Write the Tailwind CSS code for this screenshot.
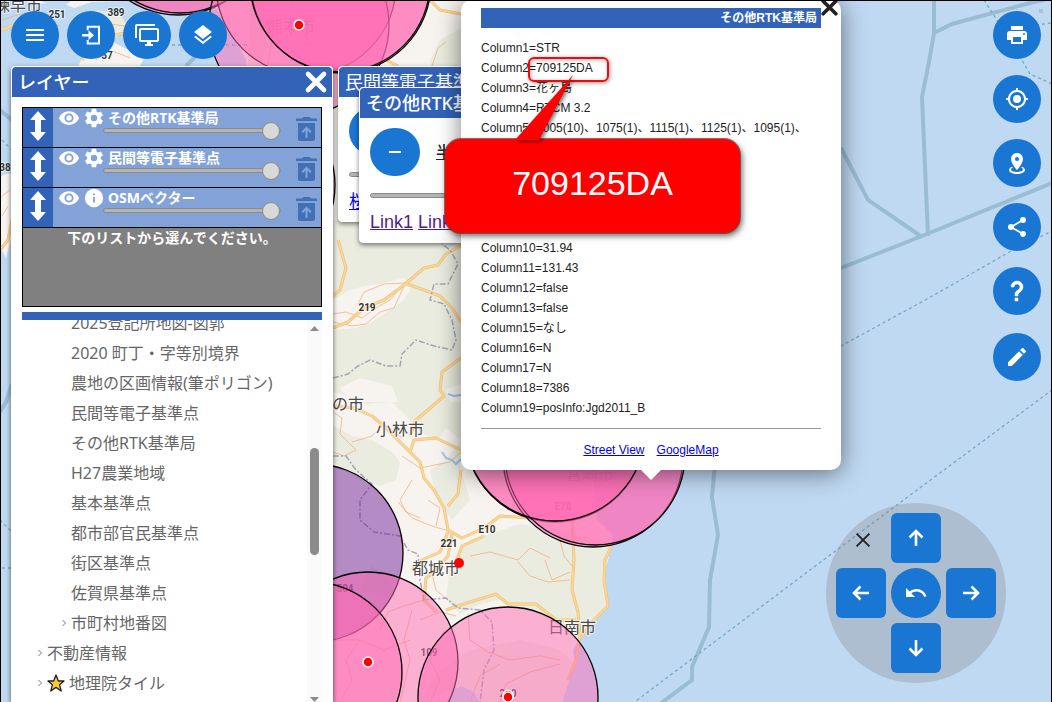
<!DOCTYPE html>
<html lang="ja">
<head>
    <meta charset="UTF-8">
    <meta name="viewport" content="width=device-width, initial-scale=1.0">
    <title>その他RTK基準局</title>
    <script src="https://cdn.jsdelivr.net/npm/@tailwindcss/browser@4"></script>
</head>
<body class="relative h-screen overflow-hidden bg-[#bfd9f2] font-['Noto_Sans','Noto_Sans_CJK_JP',sans-serif]">

    <!-- Icon sprite -->
    <svg class="hidden">
        <symbol id="menu" viewBox="0 0 24 24"><path d="M3,6H21V8H3V6M3,11H21V13H3V11M3,16H21V18H3V16Z"/></symbol>
        <symbol id="login" viewBox="0 0 24 24"><path d="M8.7 7.2V3.7H20V20.5H8.7V17" fill="none" stroke="currentColor" stroke-width="2"/><path d="M3 11H9.5V7.2L15 12.2L9.5 17.2V13.4H3Z"/></symbol>
        <symbol id="monitors" viewBox="0 0 24 24"><path d="M22,17V7H6V17H22M22,5A2,2 0 0,1 24,7V17C24,18.11 23.1,19 22,19H16V21H18V23H10V21H12V19H6C4.89,19 4,18.11 4,17V7A2,2 0 0,1 6,5H22M2,3V15H0V3A2,2 0 0,1 2,1H20V3H2Z"/></symbol>
        <symbol id="layers" viewBox="0 0 24 24"><path d="M12,16L19.36,10.27L21,9L12,2L3,9L4.63,10.27M12,18.54L4.62,12.81L3,14.07L12,21.07L21,14.07L19.37,12.8L12,18.54Z"/></symbol>
        <symbol id="printer" viewBox="0 0 24 24"><path d="M18,3H6V7H18M19,12A1,1 0 0,1 18,11A1,1 0 0,1 19,10A1,1 0 0,1 20,11A1,1 0 0,1 19,12M16,19H8V14H16M19,8H5A3,3 0 0,0 2,11V17H6V21H18V17H22V11A3,3 0 0,0 19,8Z"/></symbol>
        <symbol id="gps" viewBox="0 0 24 24"><path d="M12,8A4,4 0 0,1 16,12A4,4 0 0,1 12,16A4,4 0 0,1 8,12A4,4 0 0,1 12,8M3.05,13H1V11H3.05C3.5,6.83 6.83,3.5 11,3.05V1H13V3.05C17.17,3.5 20.5,6.83 20.95,11H23V13H20.95C20.5,17.17 17.17,20.5 13,20.95V23H11V20.95C6.83,20.5 3.5,17.17 3.05,13M12,5A7,7 0 0,0 5,12A7,7 0 0,0 12,19A7,7 0 0,0 19,12A7,7 0 0,0 12,5Z"/></symbol>
        <symbol id="marker" viewBox="0 0 24 24"><path d="M12,2C15.31,2 18,4.66 18,7.95C18,12.41 12,19 12,19C12,19 6,12.41 6,7.95C6,4.66 8.69,2 12,2M12,6A2,2 0 0,0 10,8A2,2 0 0,0 12,10A2,2 0 0,0 14,8A2,2 0 0,0 12,6M20,19C20,21.21 16.42,23 12,23C7.58,23 4,21.21 4,19C4,17.71 5.22,16.56 7.11,15.83L7.75,16.74C6.67,17.19 6,17.81 6,18.5C6,19.88 8.69,21 12,21C15.31,21 18,19.88 18,18.5C18,17.81 17.33,17.19 16.25,16.74L16.89,15.83C18.78,16.56 20,17.71 20,19Z"/></symbol>
        <symbol id="share" viewBox="0 0 24 24"><path d="M18,16.08C17.24,16.08 16.56,16.38 16.04,16.85L8.91,12.7C8.96,12.47 9,12.24 9,12C9,11.76 8.96,11.53 8.91,11.3L15.96,7.19C16.5,7.69 17.21,8 18,8A3,3 0 0,0 21,5A3,3 0 0,0 18,2A3,3 0 0,0 15,5C15,5.24 15.04,5.47 15.09,5.7L8.04,9.81C7.5,9.31 6.79,9 6,9A3,3 0 0,0 3,12A3,3 0 0,0 6,15C6.79,15 7.5,14.69 8.04,14.19L15.16,18.34C15.11,18.55 15.08,18.77 15.08,19C15.08,20.61 16.39,21.91 18,21.91C19.61,21.91 20.92,20.61 20.92,19A2.92,2.92 0 0,0 18,16.08Z"/></symbol>
        <symbol id="help" viewBox="0 0 24 24"><path d="M10,19H13V22H10V19M12,2C17.35,2.22 19.68,7.62 16.5,11.67C15.67,12.67 14.33,13.33 13.67,14.17C13,15 13,16 13,17H10C10,15.33 10,13.92 10.67,12.92C11.33,11.92 12.67,11.33 13.5,10.67C15.92,8.43 15.32,5.26 12,5A3,3 0 0,0 9,8H6A6,6 0 0,1 12,2Z" stroke="currentColor" stroke-width=".5"/></symbol>
        <symbol id="pencil" viewBox="0 0 24 24"><path d="M20.71,7.04C21.1,6.65 21.1,6 20.71,5.63L18.37,3.29C18,2.9 17.35,2.9 16.96,3.29L15.12,5.12L18.87,8.87M3,17.25V21H6.75L17.81,9.93L14.06,6.18L3,17.25Z"/></symbol>
        <symbol id="undo" viewBox="0 0 24 24"><path d="M12.5,8C9.85,8 7.45,9 5.6,10.6L2,7V16H11L7.38,12.38C8.77,11.22 10.54,10.5 12.5,10.5C16.04,10.5 19.08,12.81 20.14,16L22.5,15.22C21.11,11.03 17.15,8 12.5,8Z"/></symbol>
        <symbol id="arrow" viewBox="0 0 24 24"><path d="M12 20V5M5.5 11.5L12 5L18.5 11.5" fill="none" stroke="currentColor" stroke-width="2.6"/></symbol>
        <symbol id="eye" viewBox="0 0 24 24"><path d="M12,9A3,3 0 0,0 9,12A3,3 0 0,0 12,15A3,3 0 0,0 15,12A3,3 0 0,0 12,9M12,17A5,5 0 0,1 7,12A5,5 0 0,1 12,7A5,5 0 0,1 17,12A5,5 0 0,1 12,17M12,4.5C7,4.5 2.73,7.61 1,12C2.73,16.39 7,19.5 12,19.5C17,19.5 21.27,16.39 23,12C21.27,7.61 17,4.5 12,4.5Z"/></symbol>
        <symbol id="cog" viewBox="0 0 24 24"><path d="M12,15.5A3.5,3.5 0 0,1 8.5,12A3.5,3.5 0 0,1 12,8.5A3.5,3.5 0 0,1 15.5,12A3.5,3.5 0 0,1 12,15.5M19.43,12.97C19.47,12.65 19.5,12.33 19.5,12C19.5,11.67 19.47,11.34 19.43,11L21.54,9.37C21.73,9.22 21.78,8.95 21.66,8.73L19.66,5.27C19.54,5.05 19.27,4.96 19.05,5.05L16.56,6.05C16.04,5.66 15.5,5.32 14.87,5.07L14.5,2.42C14.46,2.18 14.25,2 14,2H10C9.75,2 9.54,2.18 9.5,2.42L9.13,5.07C8.5,5.32 7.96,5.66 7.44,6.05L4.95,5.05C4.73,4.96 4.46,5.05 4.34,5.27L2.34,8.73C2.21,8.95 2.27,9.22 2.46,9.37L4.57,11C4.53,11.34 4.5,11.67 4.5,12C4.5,12.33 4.53,12.65 4.57,12.97L2.46,14.63C2.27,14.78 2.21,15.05 2.34,15.27L4.34,18.73C4.46,18.95 4.73,19.03 4.95,18.95L7.44,17.94C7.96,18.34 8.5,18.68 9.13,18.93L9.5,21.58C9.54,21.82 9.75,22 10,22H14C14.25,22 14.46,21.82 14.5,21.58L14.87,18.93C15.5,18.67 16.04,18.34 16.56,17.94L19.05,18.95C19.27,19.03 19.54,18.95 19.66,18.73L21.66,15.27C21.78,15.05 21.73,14.78 21.54,14.63L19.43,12.97Z"/></symbol>
        <symbol id="info" viewBox="0 0 24 24"><path d="M13,9H11V7H13M13,17H11V11H13M12,2A10,10 0 0,0 2,12A10,10 0 0,0 12,22A10,10 0 0,0 22,12A10,10 0 0,0 12,2Z"/></symbol>
        <symbol id="updown" viewBox="0 0 16 30"><path d="M8 0L16 9H11V21H16L8 30L0 21H5V9H0Z"/></symbol>
        <symbol id="trash" viewBox="0 0 21 24"><path fill-rule="evenodd" d="M0 1.5H6L7.5 0H13.5L15 1.5H21V4H0ZM2 6H19V22A2 2 0 0 1 17 24H4A2 2 0 0 1 2 22ZM10.5 9.5L5.5 14.5L7 16L9.5 13.5V21H11.5V13.5L14 16L15.5 14.5Z"/></symbol>
        <symbol id="close" viewBox="0 0 24 24"><path d="M4 4L20 20M20 4L4 20" fill="none" stroke="currentColor" stroke-width="4.6" stroke-linecap="round"/></symbol>
        <symbol id="close-thin" viewBox="0 0 24 24"><path d="M5 5L19 19M19 5L5 19" fill="none" stroke="currentColor" stroke-width="2"/></symbol>
    </svg>

    <!-- Map -->
    <svg class="absolute inset-0 size-full" viewBox="0 0 1052 702" preserveAspectRatio="xMinYMin slice">
        <!-- land -->
        <path fill="#f7f4ef" d="M0 0H34L36 4L60 2L74 8L92 2L150 0H212L222 20L236 40L246 60L248 702H447L452 690L462 686L474 692L480 702H562L568 684L575 663L573 650L582 635L593 620L608 607L604 592L603 577L608 560L612 545L613 535L604 526L597 520L593 470V0Z"/>
        <path fill="#bfd9f2" d="M36 0H72L66 5L50 4ZM150 0H212L246 66H140L146 40L172 24ZM0 45L12 32L20 20L30 66H0ZM30 66L34 30L60 40L80 66Z"/>
        <path fill="#f7f4ef" d="M78 66L88 48L110 40L128 50L150 48L140 66ZM0 176L12 172V235L6 258L0 246Z"/>
        <path fill="#bfd9f2" d="M0 60H14V172L0 176ZM0 262H14V702H0Z"/>
        <path fill="#eaecdf" d="M333 220H461V440L446 428L438 440L420 432L404 414L392 402L366 404L350 396L333 392ZM333 425L352 436L372 440L392 452L400 462L396 480L380 486L360 480L333 462ZM470 540L520 524L560 530L598 540L612 545L603 577L608 607L593 620L580 634L560 626L530 610L500 600L480 604L460 614L446 600L450 566ZM430 60L440 40L461 28V66H430ZM461 440V470L470 500L452 520L436 496L430 470L446 460ZM360 590L372 566L390 580L396 600Z"/>
        <path fill="#eaecdf" d="M95 10L120 14L130 30L110 40L92 28ZM250 0L270 20L262 66H248ZM420 702L440 670L470 650L520 640L560 650L574 664L562 702H480L474 692L462 686Z"/>
        <path fill="#f7f4ef" d="M333 300L350 290L364 286L380 284L404 278L412 286L404 300L390 310L372 322L356 328L333 330ZM340 388L360 378L392 386L398 402H350ZM446 390L461 384V402H450Z"/>

        <!-- minor roads -->
        <g fill="none" stroke="#f0a878" stroke-width="1" opacity=".7">
            <path d="M333 314L346 312L362 318L376 308L390 300L404 284M333 322L352 326L366 324L380 312L394 308L404 286M358 304L364 292L384 284L404 283M333 412L342 418L340 434L348 442L356 450L344 456L333 452M352 442L372 436L384 424L402 438M398 502L412 518L432 526L452 532M402 456L420 468L450 462L461 452M412 480L400 500L406 512L420 518M428 500L440 508L436 526M432 574L436 590L448 600M470 556L490 552L518 560L530 548L550 558M518 562L530 576L548 582L570 580M545 560L552 580L570 572M560 540L564 556L572 566M380 630L388 612L404 606L424 600M420 620L440 612L456 616M468 614L470 640L488 652L510 660L540 656L560 660M500 702L506 684L530 672L560 664M470 702L480 676L500 664M333 640L360 640L384 650L410 640M340 702L352 680L346 660L360 640M400 702L410 660L404 640L412 610M430 702L440 680L430 660L444 630"/>
            <path d="M258 0L262 20L272 40L268 64M270 40L300 44L330 42L350 20M290 0L296 20L320 60M432 66L438 48L446 42M2 20L20 14L40 18L60 26M80 20L96 32L110 24L140 28M96 60L110 50L130 58M2 196L10 190M2 216L8 206"/>
        </g>

        <!-- trunk roads -->
        <g fill="none" stroke="#ecbd78" stroke-width="3" stroke-linejoin="round">
            <path d="M333 328L348 322L364 308L384 300L404 285L424 268L438 265L446 254L461 246M404 283L424 290L440 296L452 308L461 322M333 406L354 408L372 416L384 426L400 442L410 452L420 462L424 478L434 490L444 508L448 530L462 538L484 528L500 516L530 518L560 512M410 452L414 440L436 438L461 450M461 470L458 494L448 506M452 534L448 556L434 572L426 578L424 600L436 612"/>
            <path d="M338 240L346 268L340 290L333 296M461 358L450 366L442 372L440 390L444 396L428 410L416 420L410 436M448 532L440 552L422 560L412 570M484 536L462 546L456 562M572 520L574 560L572 590L578 612L580 634L576 660L568 680M612 545L605 560L604 580L608 606L592 622L582 636M446 610L470 602L496 594L508 604L536 604L556 620L576 620"/>
            <path d="M430 0L440 10L461 14M386 60L398 66M2 30L16 24L26 34L14 44M82 60L90 46L110 36L140 30L150 50M0 250L8 240L12 220"/>
        </g>
        <g fill="none" stroke="#fbd592" stroke-width="2" stroke-linejoin="round">
            <path d="M333 328L348 322L364 308L384 300L404 285L424 268L438 265L446 254L461 246M404 283L424 290L440 296L452 308L461 322M333 406L354 408L372 416L384 426L400 442L410 452L420 462L424 478L434 490L444 508L448 530L462 538L484 528L500 516L530 518L560 512M410 452L414 440L436 438L461 450M461 470L458 494L448 506M452 534L448 556L434 572L426 578L424 600L436 612"/>
            <path d="M338 240L346 268L340 290L333 296M461 358L450 366L442 372L440 390L444 396L428 410L416 420L410 436M448 532L440 552L422 560L412 570M484 536L462 546L456 562M572 520L574 560L572 590L578 612L580 634L576 660L568 680M612 545L605 560L604 580L608 606L592 622L582 636M446 610L470 602L496 594L508 604L536 604L556 620L576 620"/>
            <path d="M430 0L440 10L461 14M386 60L398 66M2 30L16 24L26 34L14 44M82 60L90 46L110 36L140 30L150 50M0 250L8 240L12 220"/>
        </g>

        <!-- prefecture borders and lakes -->
        <path fill="none" stroke="#a4a4b8" stroke-width="1.5" stroke-dasharray="6 2 2 2" d="M333 378L348 374L358 366L370 360L386 366L400 366L402 354L416 340L434 346L452 350L456 340L452 320L444 304L430 300L434 284L448 284L458 264L450 250L442 244M333 456L346 456L356 470L372 484L360 500L360 520L374 532L400 536L408 550L418 554L420 580L424 600L446 598L458 608L480 610L492 622L494 650L484 670L480 702"/>
        <path fill="none" stroke="#9fc3e8" stroke-width="2" d="M448 394L454 396L461 395M442 452L446 458L452 460L456 464L461 459"/>

        <!-- sea lines -->
        <g fill="none" stroke="#9abdd4" stroke-width="4">
            <path d="M934 0V33L929 62L922 97L928 236M934 33L952 24L1030 3L1052 -2M841 268L922 236L1052 183M841 148L868 200L922 237"/>
            <path d="M717 440L712 497L718 535L710 580L709 627L692 667V680L660 704M0 110L14 122M0 412L6 402L12 384M186 66L200 52"/>
        </g>
        <g fill="none" stroke="#76a9bd" stroke-width="1.3" stroke-dasharray="3 3">
            <path d="M984 0L1010 40L1030 74L1052 84M1036 25L1052 23M830 352L927 299L1013 250L1052 231M632 704L810 570L917 490L1052 390M0 520L12 532M2 568H12M2 140L12 150M166 45H250"/>
        </g>
        <path fill="#a9c0d6" d="M1039 9h4v4h-4z"/>

        <!-- place names -->
        <g fill="#4a4a4a" font-size="16" text-anchor="middle" stroke="#fff" stroke-opacity=".6" stroke-width="2" paint-order="stroke">
            <text x="18" y="11">諫早市</text>
            <text x="291" y="32">熊本市</text>
            <text x="332" y="410">えびの市</text>
            <text x="400" y="435">小林市</text>
            <text x="590" y="480">宮崎市</text>
            <text x="436" y="574">都城市</text>
            <text x="572" y="633">日南市</text>
        </g>
        <g fill="#333" font-size="10" font-family="Roboto" font-weight="bold" text-anchor="middle" stroke="#fff" stroke-opacity=".6" stroke-width="2" paint-order="stroke">
            <text x="57" y="18">251</text>
            <text x="116" y="16">389</text>
            <text x="107" y="59">57</text>
            <text x="5" y="171">38</text>
            <text x="367" y="311">219</text>
            <text x="487" y="533">E10</text>
            <text x="449" y="547">221</text>
            <text x="429" y="656">109</text>
            <text x="345" y="592">504</text>
            <text x="563" y="510">E78</text>
            <text x="508" y="697">220</text>
        </g>

        <!-- coverage circles, 20km each -->
        <g fill="#ff69b4" fill-opacity=".5" stroke="#000" stroke-width="1.3">
            <circle cx="178" cy="-75" r="90"/>
            <circle cx="180" cy="-77" r="90"/>
            <circle cx="306" cy="-15" r="90"/>
            <circle cx="299" cy="25" r="90"/>
            <circle cx="341" cy="-17" r="90"/>
            <circle cx="340" cy="-18" r="90"/>
            <circle cx="245" cy="185" r="90"/>
            <circle cx="555" cy="432" r="90"/>
            <circle cx="593" cy="457" r="90"/>
            <circle cx="595" cy="455" r="90"/>
            <circle cx="555" cy="431" r="90"/>
            <circle cx="314" cy="553" r="89" fill="#73229c"/>
            <circle cx="368" cy="662" r="90"/>
            <circle cx="312" cy="672" r="90"/>
            <circle cx="508" cy="697" r="90"/>
        </g>
        <g fill="#f00" stroke="#fff" stroke-width="1.5">
            <circle cx="299" cy="25" r="5"/>
            <circle cx="459" cy="563" r="5" stroke="none"/>
            <circle cx="368" cy="662" r="5"/>
            <circle cx="508" cy="695" r="5"/>
            <circle cx="508" cy="697" r="5"/>
        </g>
    </svg>

    <!-- Toolbar -->
    <div class="absolute left-[11px] top-[11px] flex gap-2 text-white">
        <button aria-label="メニュー" class="grid size-12 place-items-center rounded-full bg-[#1976d2]"><svg class="size-6 fill-current"><use href="#menu"/></svg></button>
        <button aria-label="ログイン" class="grid size-12 place-items-center rounded-full bg-[#1976d2]"><svg class="size-6 fill-current"><use href="#login"/></svg></button>
        <button aria-label="画面分割" class="grid size-12 place-items-center rounded-full bg-[#1976d2]"><svg class="size-6 fill-current"><use href="#monitors"/></svg></button>
        <button aria-label="レイヤー" class="grid size-12 place-items-center rounded-full bg-[#1976d2]"><svg class="size-6 fill-current"><use href="#layers"/></svg></button>
    </div>

    <!-- Right buttons -->
    <div class="absolute right-[11px] top-[11px] flex flex-col gap-4 text-white">
        <button aria-label="印刷" class="grid size-12 place-items-center rounded-full bg-[#1976d2]"><svg class="size-6 fill-current"><use href="#printer"/></svg></button>
        <button aria-label="現在地" class="grid size-12 place-items-center rounded-full bg-[#1976d2]"><svg class="size-6 fill-current"><use href="#gps"/></svg></button>
        <button aria-label="マーカー" class="grid size-12 place-items-center rounded-full bg-[#1976d2]"><svg class="size-6 fill-current"><use href="#marker"/></svg></button>
        <button aria-label="共有" class="grid size-12 place-items-center rounded-full bg-[#1976d2]"><svg class="size-6 fill-current"><use href="#share"/></svg></button>
        <button aria-label="ヘルプ" class="grid size-12 place-items-center rounded-full bg-[#1976d2]"><svg class="size-6 fill-current"><use href="#help"/></svg></button>
        <button aria-label="描画" class="mt-0.5 grid size-12 place-items-center rounded-full bg-[#1976d2]"><svg class="size-6 fill-current"><use href="#pencil"/></svg></button>
    </div>

    <!-- Dialog: 民間等電子基準点 -->
    <div class="absolute left-[338px] top-[66px] w-[300px] rounded border border-white bg-white shadow-[0_2px_5px_rgba(0,0,0,0.5)]">
        <h2 class="h-[30px] rounded-t bg-[#3263b8] px-1.5 text-lg leading-[30px] text-white">民間等電子基準点</h2>
        <div class="flex flex-col px-2.5 pt-2.5 pb-2">
            <button aria-label="縮小" class="h-12 w-[50px] rounded-full bg-[#1976d2] text-white">−</button>
            <input type="range" aria-label="半径" value="100" class="mt-[17px] block h-[5px] w-full appearance-none rounded-full border border-[#8a8a8a] bg-[#b4b4b4]">
            <a href="#" class="mt-3 text-lg leading-6 text-[#0000ee] underline">桜島</a>
        </div>
    </div>

    <!-- Dialog: その他RTK基準局 -->
    <div class="absolute left-[359px] top-[87px] w-[300px] rounded border border-white bg-white shadow-[0_2px_5px_rgba(0,0,0,0.5)]">
        <h2 class="h-[30px] rounded-t bg-[#3263b8] px-1.5 text-lg leading-[30px] font-medium text-white">その他RTK基準局</h2>
        <div class="flex flex-col px-2.5 pt-2.5 pb-2">
            <div class="flex items-center gap-4">
                <button aria-label="縮小" class="grid h-12 w-[50px] place-items-center rounded-full bg-[#1976d2]"><span class="h-0.5 w-3 bg-white"></span></button>
                <span class="font-medium text-[#222] underline">半径</span>
            </div>
            <input type="range" aria-label="半径" value="100" class="mt-[17px] block h-[5px] w-full appearance-none rounded-full border border-[#8a8a8a] bg-[#b4b4b4]">
            <p class="mt-3 font-['Liberation_Sans',sans-serif] text-lg leading-6 text-[#551a8b]"><a href="#" class="underline">Link1</a> <a href="#" class="underline">Link2</a></p>
        </div>
    </div>

    <!-- Layer panel -->
    <div class="absolute left-[11px] top-[66px] bottom-0 flex w-[322px] flex-col rounded-t border-x border-t border-white bg-white shadow-[0_2px_5px_rgba(0,0,0,0.6)]">
        <div class="flex h-[30px] shrink-0 items-center justify-between rounded-t bg-[#3263b8] pl-1.5 pr-1 text-white">
            <h2 class="text-lg leading-[30px] font-medium">レイヤー</h2>
            <button aria-label="閉じる"><svg class="size-6"><use href="#close"/></svg></button>
        </div>
        <div class="flex min-h-0 grow flex-col px-2.5 pt-2.5">
            <div class="h-[200px] shrink-0 border border-black bg-[#808080] text-sm text-white">
                <div class="flex h-10 border-b border-black bg-[#83a2d8]">
                    <button aria-label="並べ替え" class="flex w-[30px] justify-center bg-[#3263b8] pt-[3px]"><svg class="h-[30px] w-4 fill-current"><use href="#updown"/></svg></button>
                    <div>
                        <div class="flex h-5 items-center gap-[3px] pl-[5px]">
                            <svg class="size-[22px] fill-current"><use href="#eye"/></svg>
                            <svg class="size-[22px] fill-current"><use href="#cog"/></svg>
                            <span class="leading-5 font-bold">その他RTK基準局</span>
                        </div>
                        <input type="range" value="100" aria-label="その他RTK基準局" class="ml-[50px] block h-[5px] w-[178px] appearance-none rounded-full border border-[#8a8a8a] bg-[#b4b4b4] [&::-webkit-slider-thumb]:size-[18px] [&::-webkit-slider-thumb]:appearance-none [&::-webkit-slider-thumb]:rounded-full [&::-webkit-slider-thumb]:border [&::-webkit-slider-thumb]:border-[#8a8a8a] [&::-webkit-slider-thumb]:bg-[#d8d8d8]">
                    </div>
                    <button aria-label="削除" class="ml-auto mr-1 mt-[9px] h-6"><svg class="h-6 w-[21px] fill-[#4270b4]"><use href="#trash"/></svg></button>
                </div>
                <div class="flex h-10 border-b border-black bg-[#83a2d8]">
                    <button aria-label="並べ替え" class="flex w-[30px] justify-center bg-[#3263b8] pt-[3px]"><svg class="h-[30px] w-4 fill-current"><use href="#updown"/></svg></button>
                    <div>
                        <div class="flex h-5 items-center gap-[3px] pl-[5px]">
                            <svg class="size-[22px] fill-current"><use href="#eye"/></svg>
                            <svg class="size-[22px] fill-current"><use href="#cog"/></svg>
                            <span class="leading-5 font-bold">民間等電子基準点</span>
                        </div>
                        <input type="range" value="100" aria-label="民間等電子基準点" class="ml-[50px] block h-[5px] w-[178px] appearance-none rounded-full border border-[#8a8a8a] bg-[#b4b4b4] [&::-webkit-slider-thumb]:size-[18px] [&::-webkit-slider-thumb]:appearance-none [&::-webkit-slider-thumb]:rounded-full [&::-webkit-slider-thumb]:border [&::-webkit-slider-thumb]:border-[#8a8a8a] [&::-webkit-slider-thumb]:bg-[#d8d8d8]">
                    </div>
                    <button aria-label="削除" class="ml-auto mr-1 mt-[9px] h-6"><svg class="h-6 w-[21px] fill-[#4270b4]"><use href="#trash"/></svg></button>
                </div>
                <div class="flex h-10 border-b border-black bg-[#83a2d8]">
                    <button aria-label="並べ替え" class="flex w-[30px] justify-center bg-[#3263b8] pt-[3px]"><svg class="h-[30px] w-4 fill-current"><use href="#updown"/></svg></button>
                    <div>
                        <div class="flex h-5 items-center gap-[3px] pl-[5px]">
                            <svg class="size-[22px] fill-current"><use href="#eye"/></svg>
                            <svg class="size-[22px] fill-current"><use href="#info"/></svg>
                            <span class="leading-5 font-bold">OSMベクター</span>
                        </div>
                        <input type="range" value="100" aria-label="OSMベクター" class="ml-[50px] block h-[5px] w-[178px] appearance-none rounded-full border border-[#8a8a8a] bg-[#b4b4b4] [&::-webkit-slider-thumb]:size-[18px] [&::-webkit-slider-thumb]:appearance-none [&::-webkit-slider-thumb]:rounded-full [&::-webkit-slider-thumb]:border [&::-webkit-slider-thumb]:border-[#8a8a8a] [&::-webkit-slider-thumb]:bg-[#d8d8d8]">
                    </div>
                    <button aria-label="削除" class="ml-auto mr-1 mt-[9px] h-6"><svg class="h-6 w-[21px] fill-[#4270b4]"><use href="#trash"/></svg></button>
                </div>
                <p class="text-center leading-5 font-bold">下のリストから選んでください。</p>
            </div>
            <div class="mt-[5px] h-2 shrink-0 bg-[#3263b8]"></div>
            <div class="flex min-h-0 grow overflow-hidden">
                <ul class="-mt-3 grow pl-[15px] leading-[30px] text-[#666]">
                    <li class="pl-[34px]">2025登記所地図-図郭</li>
                    <li class="pl-[34px]">2020 町丁・字等別境界</li>
                    <li class="pl-[34px]">農地の区画情報(筆ポリゴン)</li>
                    <li class="pl-[34px]">民間等電子基準点</li>
                    <li class="pl-[34px]">その他RTK基準局</li>
                    <li class="pl-[34px]">H27農業地域</li>
                    <li class="pl-[34px]">基本基準点</li>
                    <li class="pl-[34px]">都市部官民基準点</li>
                    <li class="pl-[34px]">街区基準点</li>
                    <li class="pl-[34px]">佐賀県基準点</li>
                    <li class="flex items-center gap-1 pl-6"><svg class="size-1.5 fill-none stroke-[#777]" viewBox="0 0 6 6"><path d="M1.5 0L4.5 3L1.5 6"/></svg>市町村地番図</li>
                    <li class="flex items-center gap-1"><svg class="size-1.5 fill-none stroke-[#777]" viewBox="0 0 6 6"><path d="M1.5 0L4.5 3L1.5 6"/></svg>不動産情報</li>
                    <li class="flex items-center gap-1"><svg class="size-1.5 fill-none stroke-[#777]" viewBox="0 0 6 6"><path d="M1.5 0L4.5 3L1.5 6"/></svg><svg class="h-5 w-[18px] fill-[#ffc83d] stroke-[#222]" viewBox="0 0 18 20"><path stroke-linejoin="round" stroke-width="1.3" d="M9 2L11.3 8H17L12.6 11.8L14.2 18L9 14.4L3.8 18L5.4 11.8L1 8H6.7Z"/></svg>地理院タイル</li>
                </ul>
                <!-- scrollbar -->
                <div class="-mb-1.5 flex w-[15px] flex-col items-center bg-[#fafafa] py-1.5">
                    <svg class="h-[5px] w-[9px] fill-[#8b8b8b]" viewBox="0 0 9 5"><path d="M0 5L4.5 0L9 5Z"/></svg>
                    <div class="mt-[117px] h-[107px] w-[9px] rounded-full bg-[#8b8b8b]"></div>
                    <svg class="mt-auto h-[5px] w-[9px] fill-[#8b8b8b]" viewBox="0 0 9 5"><path d="M0 0L4.5 5L9 0Z"/></svg>
                </div>
            </div>
        </div>
    </div>

    <!-- Popup -->
    <div class="absolute left-[461px] top-0 w-[380px] rounded-[10px] bg-white px-5 pt-2 pb-2.5 font-['Liberation_Sans','Noto_Sans_CJK_JP',sans-serif] text-xs leading-5 text-[#222] shadow-[0_3px_24px_rgba(0,0,0,0.5)]">
        <button aria-label="閉じる" class="absolute right-0.5 top-[-2px]"><svg class="size-[19px]"><use href="#close"/></svg></button>
        <h3 class="h-5 bg-[#3263b8] pr-1 text-right font-bold text-white">その他RTK基準局</h3>
        <ul class="mt-2.5">
            <li>Column1=STR</li>
            <li>Column2=709125DA</li>
            <li>Column3=花ヶ島</li>
            <li>Column4=RTCM 3.2</li>
            <li class="h-[120px]">Column5=1005(10)、1075(1)、1115(1)、1125(1)、1095(1)、</li>
            <li>Column10=31.94</li>
            <li>Column11=131.43</li>
            <li>Column12=false</li>
            <li>Column13=false</li>
            <li>Column15=なし</li>
            <li>Column16=N</li>
            <li>Column17=N</li>
            <li>Column18=7386</li>
            <li>Column19=posInfo:Jgd2011_B</li>
        </ul>
        <hr class="mt-2.5 border-[#999]">
        <div class="mt-[11px] flex justify-center gap-3 text-[#0000ee]">
            <a href="#" class="underline">Street View</a>
            <a href="#" class="underline">GoogleMap</a>
        </div>
        <svg class="absolute left-[180px] top-full h-2.5 w-5 fill-white" viewBox="0 0 20 10"><path d="M0 0H20L10 10Z"/></svg>
    </div>

    <!-- Callout -->
    <div class="absolute left-[528px] top-[57px] h-[25px] w-[81px] rounded-md border-2 border-[#f00a0a] shadow-[1px_1px_4px_rgba(0,0,0,0.4),inset_1px_1px_4px_rgba(0,0,0,0.3)]"></div>
    <div class="absolute left-[445px] top-[139px] flex h-[94px] w-[295px] items-center justify-center rounded-2xl bg-[#ff0000] pb-1.5 font-['Liberation_Sans',sans-serif] text-[34px] text-white shadow-[0_0_0_1px_rgba(90,60,60,0.7),2px_3px_6px_rgba(0,0,0,0.6)]">
        709125DA
        <svg class="absolute left-[70px] bottom-full -mb-px h-[66px] w-[60px] fill-[#ff0000] drop-shadow-[2px_1px_2px_rgba(0,0,0,0.6)]" viewBox="0 0 60 66"><path d="M58 1L0 66H24Z"/></svg>
    </div>

    <!-- Direction pad -->
    <div class="absolute right-[46px] bottom-[19px] grid size-[180px] grid-cols-3 grid-rows-3 gap-[5px] rounded-full bg-[#808080]/30 p-2.5 text-white">
        <button aria-label="閉じる" class="grid place-items-center pt-1 pl-1 text-[#222]"><svg class="size-[22px]"><use href="#close-thin"/></svg></button>
        <button aria-label="上" class="grid place-items-center rounded-md bg-[#1976d2]"><svg class="size-6"><use href="#arrow"/></svg></button>
        <button aria-label="左" class="col-start-1 grid place-items-center rounded-md bg-[#1976d2]"><svg class="size-6 -rotate-90"><use href="#arrow"/></svg></button>
        <button aria-label="戻す" class="grid place-items-center rounded-full bg-[#1976d2]"><svg class="size-6 fill-current"><use href="#undo"/></svg></button>
        <button aria-label="右" class="grid place-items-center rounded-md bg-[#1976d2]"><svg class="size-6 rotate-90"><use href="#arrow"/></svg></button>
        <button aria-label="下" class="col-start-2 grid place-items-center rounded-md bg-[#1976d2]"><svg class="size-6 rotate-180"><use href="#arrow"/></svg></button>
    </div>

    <!-- window frame -->
    <div class="pointer-events-none absolute inset-0 border-x border-t border-black"></div>
</body>
</html>
